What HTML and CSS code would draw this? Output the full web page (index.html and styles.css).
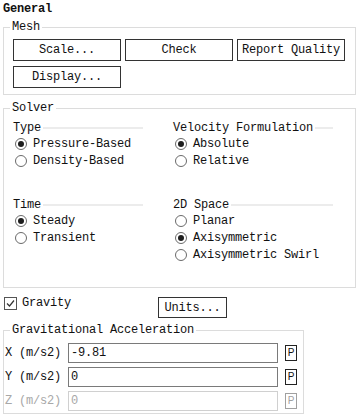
FILE: index.html
```html
<!DOCTYPE html>
<html>
<head>
<meta charset="utf-8">
<link rel="stylesheet" href="styles.css">
</head>
<body>
<div class="page">
  <div class="title">General</div>

  <fieldset class="group mesh">
    <legend>Mesh</legend>
    <div class="btn-grid">
      <button class="btn">Scale...</button>
      <button class="btn">Check</button>
      <button class="btn">Report Quality</button>
      <button class="btn">Display...</button>
    </div>
  </fieldset>

  <fieldset class="group solver">
    <legend>Solver</legend>
    <div class="solver-grid">
      <div class="section">
        <div class="sec-title">Type</div>
        <label class="radio"><span class="dot on"></span>Pressure-Based</label>
        <label class="radio"><span class="dot"></span>Density-Based</label>
      </div>
      <div class="section">
        <div class="sec-title">Velocity Formulation</div>
        <label class="radio"><span class="dot on"></span>Absolute</label>
        <label class="radio"><span class="dot"></span>Relative</label>
      </div>
      <div class="section">
        <div class="sec-title">Time</div>
        <label class="radio"><span class="dot on"></span>Steady</label>
        <label class="radio"><span class="dot"></span>Transient</label>
      </div>
      <div class="section">
        <div class="sec-title">2D Space</div>
        <label class="radio"><span class="dot"></span>Planar</label>
        <label class="radio"><span class="dot on"></span>Axisymmetric</label>
        <label class="radio"><span class="dot"></span>Axisymmetric Swirl</label>
      </div>
    </div>
  </fieldset>

  <div class="grav-row">
    <label class="check"><span class="box"><svg width="11" height="11" viewBox="0 0 11 11"><polyline points="2,5.5 4.5,8 9,2.5" fill="none" stroke="#333" stroke-width="1.2"/></svg></span>Gravity</label>
    <button class="btn units">Units...</button>
  </div>

  <fieldset class="group accel">
    <legend>Gravitational Acceleration</legend>
    <div class="accel-grid">
      <span class="lbl">X (m/s2)</span>
      <input class="field" type="text" value="-9.81">
      <span class="pbtn">P</span>

      <span class="lbl">Y (m/s2)</span>
      <input class="field" type="text" value="0">
      <span class="pbtn">P</span>

      <span class="lbl disabled">Z (m/s2)</span>
      <input class="field" type="text" value="0" disabled>
      <span class="pbtn disabled">P</span>
    </div>
  </fieldset>
</div>
</body>
</html>
```

FILE: styles.css
```css
body {
  margin: 0;
  background: #fff;
  font-family: "Liberation Mono", "DejaVu Sans Mono", monospace;
  font-size: 12px;
  letter-spacing: -0.2px;
  color: #111;
}

.page {
  padding: 0 0 0 3px;
  display: flex;
  flex-direction: column;
  align-items: flex-start;
}

.title {
  font-weight: bold;
  line-height: 16px;
  padding-top: 1px;
  margin-bottom: 3px;
}

fieldset.group {
  margin: 0;
  border: 1px solid #dcdcdc;
  min-width: 0;
  box-sizing: border-box;
}

fieldset.group legend {
  padding: 0 2px;
  margin-left: -3px;
  line-height: 14px;
}

fieldset.mesh {
  width: 353px;
  padding: 5px 10px 6px 9px;
}

.btn-grid {
  display: grid;
  grid-template-columns: repeat(3, 108px);
  grid-auto-rows: 22px;
  column-gap: 4px;
  row-gap: 5px;
}

.btn {
  font: inherit;
  letter-spacing: inherit;
  color: #111;
  background: #fff;
  border: 1px solid #333;
  border-radius: 0;
  padding: 0;
  margin: 0;
  box-sizing: border-box;
  white-space: nowrap;
}

fieldset.solver {
  width: 353px;
  margin-top: 6px;
  padding: 6px 0 24px 9px;
}

.solver-grid {
  display: grid;
  grid-template-columns: 130px 160px;
  grid-template-rows: 77px auto;
  column-gap: 30px;
}

.sec-title {
  display: flex;
  align-items: center;
  gap: 2px;
  height: 14px;
  line-height: 14px;
  white-space: nowrap;
}

.sec-title::after {
  content: "";
  flex: 1;
  height: 2px;
  background: #ececec;
}

.radio {
  display: flex;
  align-items: center;
  gap: 6px;
  height: 17px;
  padding-left: 2px;
  white-space: nowrap;
}

.dot {
  flex: none;
  width: 12px;
  height: 12px;
  box-sizing: border-box;
  border: 1px solid #6a6a6a;
  border-radius: 50%;
  display: flex;
  align-items: center;
  justify-content: center;
  background: #fff;
}

.dot.on::after {
  content: "";
  width: 6px;
  height: 6px;
  border-radius: 50%;
  background: #1e1e1e;
}

.grav-row {
  display: grid;
  grid-template-columns: 154px 69px;
  margin-top: 9px;
  padding-left: 1px;
}

.check {
  display: flex;
  align-items: center;
  gap: 5px;
  height: 13px;
  line-height: 13px;
}

.box {
  flex: none;
  width: 13px;
  height: 13px;
  box-sizing: border-box;
  border: 1px solid #555;
  display: flex;
  align-items: center;
  justify-content: center;
}

.units {
  width: 69px;
  height: 21px;
}

fieldset.accel {
  width: 301px;
  margin-top: 5px;
  padding: 6px 5px 2px 1px;
}

fieldset.accel legend {
  margin-left: 5px;
}

.accel-grid {
  display: grid;
  grid-template-columns: 63px 210px 19px;
  grid-auto-rows: 20px;
  row-gap: 4px;
  align-items: center;
}

.lbl {
  white-space: nowrap;
}

.lbl.disabled {
  color: #a8a8a8;
}

.field {
  font: inherit;
  letter-spacing: inherit;
  color: #111;
  height: 20px;
  width: 210px;
  box-sizing: border-box;
  border: 1px solid #7a7a7a;
  border-radius: 0;
  padding: 0 2px;
  margin: 0;
  background: #fff;
  outline: none;
}

.field:disabled {
  border-color: #d0d0d0;
  color: #a8a8a8;
  background: #fff;
}

.pbtn {
  justify-self: end;
  width: 12px;
  height: 16px;
  box-sizing: border-box;
  border: 1px solid #222;
  font-family: "Liberation Sans", sans-serif;
  font-size: 10px;
  line-height: 14px;
  text-align: center;
  letter-spacing: 0;
}

.pbtn.disabled {
  border-color: #a0a0a0;
  color: #a0a0a0;
}
```
